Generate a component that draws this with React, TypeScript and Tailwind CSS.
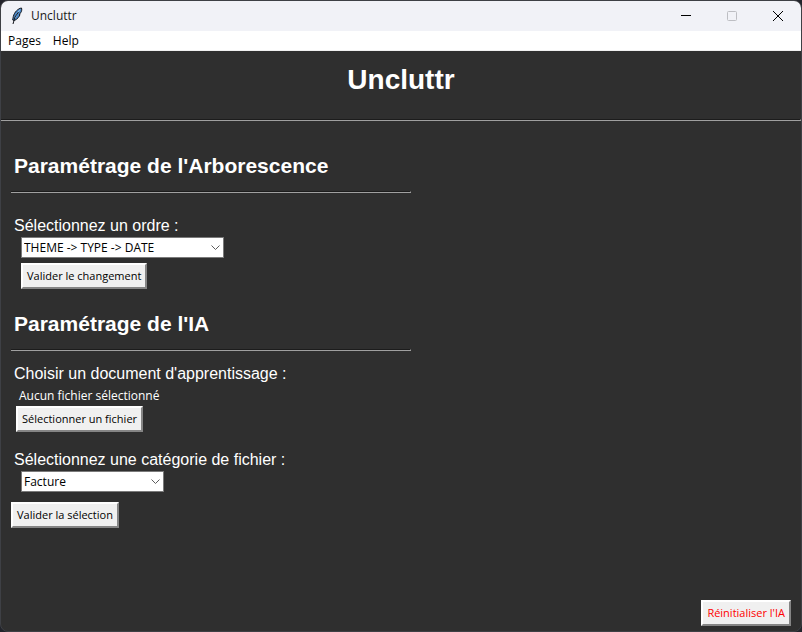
import type { ReactNode } from "react";

const systemFont = "font-['Open_Sans','Noto_Sans',sans-serif] text-[12px] leading-4";
const buttonFont = "font-['Open_Sans','Noto_Sans',sans-serif] text-[11px] leading-4";
const labelFont = "font-['Liberation_Sans',Arial,sans-serif] text-[16px] leading-6";

function Feather() {
  return (
    <svg width="12" height="18" viewBox="0 0 12 18" aria-hidden="true">
      <path d="M10.500 1C7 1.500 3.500 5 2.300 9.500L1.700 13L3.500 13.500C6.500 12 8.500 9.500 9 7.500L8.200 7.300L10 5.500C10.700 4 11 2.500 10.500 1Z" fill="#4a86c5" stroke="#11161d" strokeWidth="1" />
      <path d="M9 2.500L6 7L4 11" fill="none" stroke="#9cc8ef" strokeWidth="1" />
      <path d="M7.500 5L4 10L2 17" fill="none" stroke="#15181d" strokeWidth="1" />
    </svg>
  );
}

function Rule() {
  return <hr className="h-[2px] border-0 border-t border-r border-b border-t-[#1c1c1c] border-r-[#a0a0a0] border-b-[#a0a0a0]" />;
}

function TkButton({ children, danger = false }: { children: ReactNode; danger?: boolean }) {
  return (
    <button
      type="button"
      className={`${buttonFont} h-[26px] whitespace-nowrap border-2 border-t-white border-l-white border-r-[#858585] border-b-[#858585] bg-[#f0f0f0] px-1 ${danger ? "text-[#ff0000]" : "text-black"}`}
    >
      {children}
    </button>
  );
}

function Combo({ id, options, width }: { id: string; options: string[]; width: string }) {
  return (
    <div className={`relative ml-[10px] ${width}`}>
      <select
        id={id}
        className={`${systemFont} block h-[21px] w-full appearance-none rounded-none border border-[#7a7a7a] bg-white pr-5 pl-[2px] text-black`}
      >
        {options.map((option) => (
          <option key={option}>{option}</option>
        ))}
      </select>
      <svg className="pointer-events-none absolute top-2 right-1" width="9" height="6" viewBox="0 0 9 6" aria-hidden="true">
        <path d="M0.500 0.500L4.500 4.500L8.500 0.500" fill="none" stroke="#5c5c5c" />
      </svg>
    </div>
  );
}

function SectionTitle({ children }: { children: ReactNode }) {
  return (
    <>
      <h2 className="px-[3px] font-['Liberation_Sans',Arial,sans-serif] text-[21px] leading-8 font-bold">{children}</h2>
      <div className="mt-[9px] max-w-[400px]">
        <Rule />
      </div>
    </>
  );
}

export default function App() {
  return (
    <div className="min-h-screen bg-[#22242b]">
      <div className="flex min-h-screen flex-col overflow-hidden rounded-lg border border-[#3e4045] bg-[#2f2f2f] text-white">
        <header className={`${systemFont} flex h-[30px] shrink-0 items-center bg-[#f1f2f7] pl-[10px] text-[#1a1a1a]`}>
          <Feather />
          <span className="ml-2 flex-1">Uncluttr</span>
          <button type="button" aria-label="Réduire" className="flex h-full w-[46px] items-center justify-center">
            <svg width="10" height="10" viewBox="0 0 10 10">
              <path d="M0 4.500H10" stroke="#000" />
            </svg>
          </button>
          <button type="button" aria-label="Agrandir" disabled className="flex h-full w-[46px] items-center justify-center">
            <svg width="10" height="10" viewBox="0 0 10 10">
              <rect x="0.500" y="0.500" width="9" height="9" rx="1" fill="none" stroke="#bdbec3" />
            </svg>
          </button>
          <button type="button" aria-label="Fermer" className="flex h-full w-[46px] items-center justify-center">
            <svg width="10" height="10" viewBox="0 0 10 10">
              <path d="M0 0L10 10M10 0L0 10" stroke="#000" />
            </svg>
          </button>
        </header>
        <nav className={`${systemFont} flex h-5 shrink-0 items-center border-b border-[#f0f0f0] bg-white text-black`}>
          <button type="button" className="pr-[5px] pl-[7px]">Pages</button>
          <button type="button" className="px-[7px]">Help</button>
        </nav>

        <h1 className="pt-[9px] text-center font-['Liberation_Sans',Arial,sans-serif] text-[28px] leading-10 font-bold">Uncluttr</h1>
        <div className="mt-[19px]">
          <Rule />
        </div>

        <main className="flex flex-1 flex-col px-[10px] pt-[29px] pb-[5px]">
          <section>
            <SectionTitle>Paramétrage de l'Arborescence</SectionTitle>
            <label htmlFor="ordre" className={`${labelFont} mt-[21px] -mb-px block px-[3px]`}>
              Sélectionnez un ordre :
            </label>
            <Combo id="ordre" width="w-[203px]" options={["THEME -> TYPE -> DATE"]} />
            <div className="mt-[5px] ml-[10px] flex">
              <TkButton>Valider le changement</TkButton>
            </div>
          </section>

          <section className="mt-[19px]">
            <SectionTitle>Paramétrage de l'IA</SectionTitle>
            <p className={`${labelFont} mt-[11px] px-[3px]`}>Choisir un document d'apprentissage :</p>
            <p className={`${systemFont} mt-[2px] ml-2`}>Aucun fichier sélectionné</p>
            <div className="mt-[2px] ml-[5px] flex">
              <TkButton>Sélectionner un fichier</TkButton>
            </div>
            <label htmlFor="categorie" className={`${labelFont} mt-4 -mb-px block px-[3px]`}>
              Sélectionnez une catégorie de fichier :
            </label>
            <Combo id="categorie" width="w-[143px]" options={["Facture"]} />
            <div className="mt-[10px] flex">
              <TkButton>Valider la sélection</TkButton>
            </div>
          </section>

          <div className="mt-auto flex justify-end">
            <TkButton danger>Réinitialiser l'IA</TkButton>
          </div>
        </main>
      </div>
    </div>
  );
}
